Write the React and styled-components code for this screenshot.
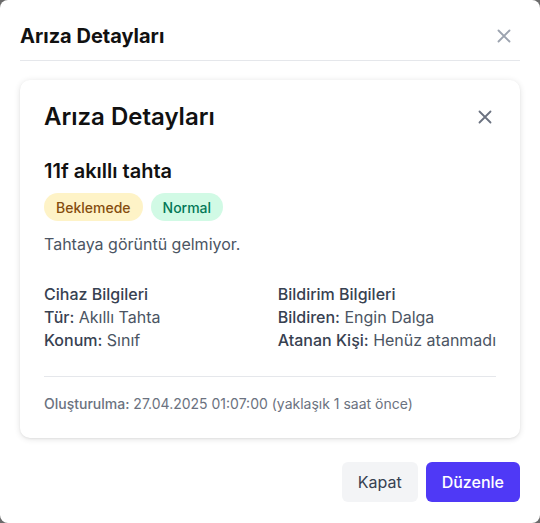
import styled, { createGlobalStyle } from 'styled-components';

const GlobalStyle = createGlobalStyle`
  html, body {
    margin: 0;
    padding: 0;
    background: #6b6b6b;
    font-family: Inter, "Noto Sans", sans-serif;
  }
  * { box-sizing: border-box; }
`;

const Modal = styled.div`
  width: 540px;
  height: 523px;
  background: #fff;
  border-radius: 8px;
  padding: 0 20px;
  display: flex;
  flex-direction: column;
`;

const ModalHeader = styled.div`
  height: 61px;
  display: flex;
  align-items: center;
  justify-content: space-between;
  border-bottom: 1px solid #e5e7eb;
  padding-top: 12px;
`;

const ModalTitle = styled.h2`
  margin: 0;
  font-size: 20px;
  line-height: 28px;
  font-weight: 700;
  color: #111;
`;

const CloseButton = styled.button`
  border: none;
  background: none;
  padding: 0;
  margin-right: ${p => p.$dark ? '0' : '5px'};
  display: flex;
  color: ${p => p.$dark ? '#6b7280' : '#9ca3af'};
  cursor: pointer;
`;

const Card = styled.div`
  margin-top: 19px;
  background: #fff;
  border-radius: 10px;
  box-shadow: 0 1px 6px rgba(0, 0, 0, 0.12), 0 1px 2px rgba(0, 0, 0, 0.05);
  padding: 23px 24px 24px;
`;

const CardHeader = styled.div`
  display: flex;
  align-items: center;
  justify-content: space-between;
`;

const CardTitle = styled.h3`
  margin: 0;
  font-size: 24px;
  line-height: 28px;
  font-weight: 600;
  color: #111;
`;

const Subject = styled.h4`
  margin: 26px 0 0;
  font-size: 20px;
  line-height: 28px;
  font-weight: 600;
  color: #111;
`;

const Badges = styled.div`
  display: flex;
  gap: 8px;
  margin-top: 8px;
`;

const Badge = styled.span`
  height: 28px;
  padding: 0 12px;
  border-radius: 999px;
  display: inline-flex;
  align-items: center;
  font-size: 14px;
  font-weight: 500;
  background: ${p => p.$tone === 'yellow' ? '#fef3c7' : '#d1fae5'};
  color: ${p => p.$tone === 'yellow' ? '#854d0e' : '#047857'};
`;

const Description = styled.p`
  margin: 11px 0 0;
  font-size: 16px;
  line-height: 24px;
  color: #4b5563;
`;

const InfoGrid = styled.div`
  display: grid;
  grid-template-columns: 1fr 1fr;
  column-gap: 16px;
  margin-top: 27px;
  padding-bottom: 24px;
  border-bottom: 1px solid #e5e7eb;
`;

const InfoColumn = styled.div`
  display: flex;
  flex-direction: column;
  font-size: 16px;
  line-height: 23px;
  color: #4b5563;
  white-space: nowrap;
`;

const InfoTitle = styled.div`
  font-weight: 500;
  color: #374151;
`;

const Label = styled.span`
  font-weight: 500;
  color: ${p => p.$muted ? 'inherit' : '#374151'};
`;

const Footnote = styled.div`
  margin-top: 17px;
  font-size: 14px;
  color: #6b7280;
  line-height: 20px;
`;

const Actions = styled.div`
  margin-top: auto;
  padding-bottom: 21px;
  display: flex;
  justify-content: flex-end;
  gap: 8px;
`;

const Button = styled.button`
  height: 40px;
  padding: 0 16px;
  border: none;
  border-radius: 6px;
  font-family: inherit;
  font-size: 16px;
  font-weight: ${p => p.$primary ? 500 : 400};
  background: ${p => p.$primary ? '#4f39f6' : '#f3f4f6'};
  color: ${p => p.$primary ? '#fff' : '#374151'};
  cursor: pointer;
`;

const XIcon = ({ size }) => (
  <svg width={size} height={size} viewBox="0 0 24 24" fill="none" stroke="currentColor" strokeWidth="2" strokeLinecap="round">
    <path d="M6 6l12 12M18 6L6 18" />
  </svg>
);

export default function App() {
  return (
    <>
      <GlobalStyle />
      <Modal>
        <ModalHeader>
          <ModalTitle>Arıza Detayları</ModalTitle>
          <CloseButton><XIcon size={22} /></CloseButton>
        </ModalHeader>
        <Card>
          <CardHeader>
            <CardTitle>Arıza Detayları</CardTitle>
            <CloseButton $dark><XIcon size={22} /></CloseButton>
          </CardHeader>
          <Subject>11f akıllı tahta</Subject>
          <Badges>
            <Badge $tone="yellow">Beklemede</Badge>
            <Badge $tone="green">Normal</Badge>
          </Badges>
          <Description>Tahtaya görüntü gelmiyor.</Description>
          <InfoGrid>
            <InfoColumn>
              <InfoTitle>Cihaz Bilgileri</InfoTitle>
              <div><Label>Tür:</Label> Akıllı Tahta</div>
              <div><Label>Konum:</Label> Sınıf</div>
            </InfoColumn>
            <InfoColumn>
              <InfoTitle>Bildirim Bilgileri</InfoTitle>
              <div><Label>Bildiren:</Label> Engin Dalga</div>
              <div><Label>Atanan Kişi:</Label> Henüz atanmadı</div>
            </InfoColumn>
          </InfoGrid>
          <Footnote><Label $muted>Oluşturulma:</Label> 27.04.2025 01:07:00 (yaklaşık 1 saat önce)</Footnote>
        </Card>
        <Actions>
          <Button>Kapat</Button>
          <Button $primary>Düzenle</Button>
        </Actions>
      </Modal>
    </>
  );
}
